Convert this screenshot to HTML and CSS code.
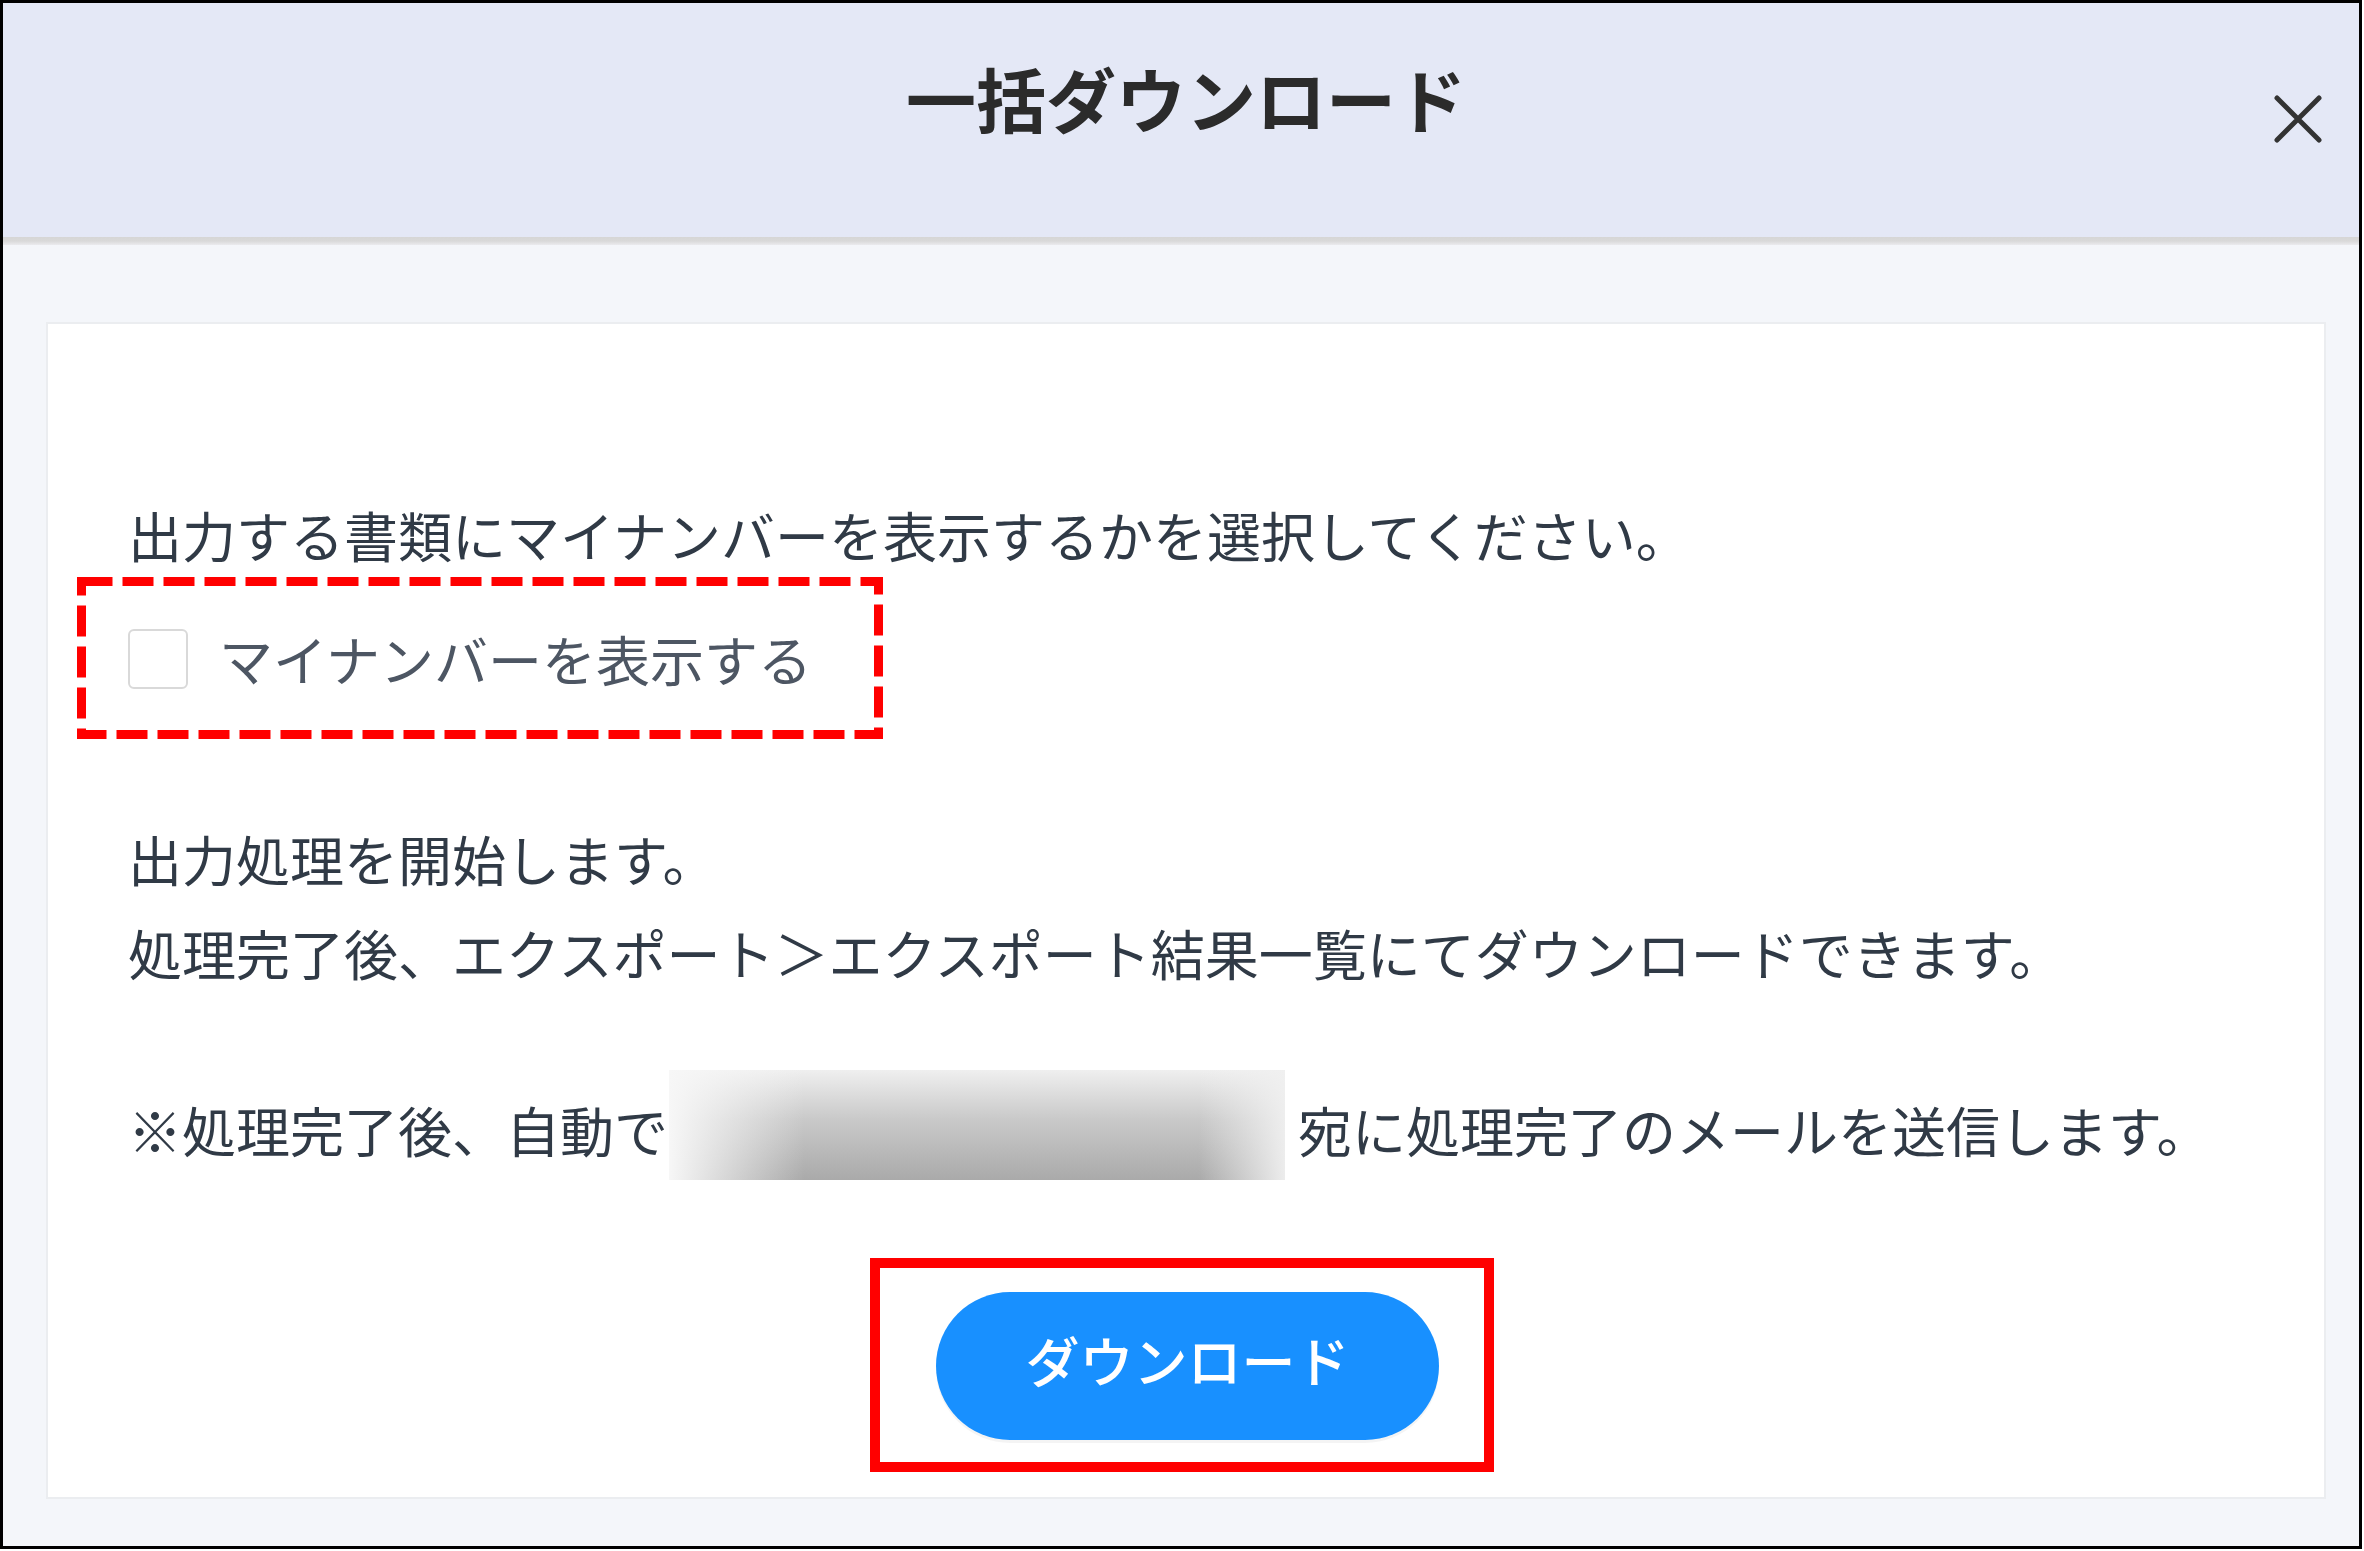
FILE: index.html
```html
<!DOCTYPE html>
<html lang="ja">
<head>
<meta charset="utf-8">
<title>一括ダウンロード</title>
<link rel="stylesheet" href="styles.css">
</head>
<body>
<div class="frame">
  <header class="modal-header">
    <h1 class="title">一括ダウンロード</h1>
    <button class="close" type="button" aria-label="閉じる">
      <svg viewBox="0 0 48 48" width="48" height="48"><path d="M3 3 L45 45 M45 3 L3 45" stroke="#333" stroke-width="5" stroke-linecap="round" fill="none"/></svg>
    </button>
  </header>
  <div class="divider"></div>
  <main class="modal-body">
    <section class="card">
      <p class="text">出力する書類にマイナンバーを表示するかを選択してください。</p>
      <div class="annot-dashed">
        <svg class="dash-svg" viewBox="0 0 806 162" width="806" height="162"><rect x="4.5" y="4.5" width="797" height="153" fill="none" stroke="#ff0000" stroke-width="9" stroke-dasharray="31 10"/></svg>
        <label class="check"><span class="box"></span><span class="check-label">マイナンバーを表示する</span></label>
      </div>
      <p class="text gap1">出力処理を開始します。<br>処理完了後、エクスポート＞エクスポート結果一覧にてダウンロードできます。</p>
      <p class="text gap2">※処理完了後、自動で<span class="blur"></span>宛に処理完了のメールを送信します。</p>
      <div class="btn-row">
        <div class="annot-solid"><button class="btn" type="button">ダウンロード</button></div>
      </div>
    </section>
  </main>
</div>
</body>
</html>
```
FILE: styles.css
```css
html, body {
  margin: 0;
  padding: 0;
  background: #ffffff;
}
body {
  font-family: "Noto Sans CJK JP", "Noto Sans", sans-serif;
}
.frame {
  width: 2362px;
  height: 1549px;
  box-sizing: border-box;
  border: 3px solid #000;
  display: flex;
  flex-direction: column;
  background: #f4f6fa;
}
.modal-header {
  position: relative;
  height: 234px;
  flex: none;
  background: #e4e8f6;
  box-sizing: border-box;
  padding-top: 45px;
}
.title {
  margin: 0;
  padding-left: 10px;
  text-align: center;
  font-size: 70px;
  line-height: 100px;
  font-weight: 700;
  color: #2b2b2b;
}
.close {
  position: absolute;
  top: 92px;
  right: 37px;
  width: 48px;
  height: 48px;
  padding: 0;
  border: 0;
  background: transparent;
  display: block;
}
.close svg {
  display: block;
}
.divider {
  height: 8px;
  flex: none;
  background: linear-gradient(#d6d6d6, #d9d9d9 50%, #ebebee);
}
.modal-body {
  flex: 1;
  display: flex;
  flex-direction: column;
  padding: 77px 33px 47px 43px;
}
.card {
  flex: 1;
  background: #ffffff;
  border: 2px solid #ebedf0;
  padding: 164px 88px 0 80px;
}
.text {
  margin: 0;
  font-size: 54px;
  line-height: 94px;
  color: #303a46;
}
.annot-dashed {
  position: relative;
  width: 806px;
  height: 162px;
  box-sizing: border-box;
  margin: -5px 0 0 -51px;
  padding-left: 51px;
  display: flex;
  align-items: center;
}
.dash-svg {
  position: absolute;
  left: 0;
  top: 0;
}
.check {
  display: flex;
  align-items: center;
  gap: 31px;
  margin-top: 2px;
}
.box {
  width: 60px;
  height: 60px;
  box-sizing: border-box;
  border: 2px solid #d9d9d9;
  border-radius: 6px;
  background: #fff;
}
.check-label {
  font-size: 54px;
  line-height: 94px;
  color: #4d5663;
}
.gap1 {
  margin-top: 73px;
}
.gap2 {
  margin-top: 83px;
}
.blur {
  display: inline-block;
  width: 616px;
  height: 110px;
  vertical-align: middle;
  margin: -12px 13px -12px 1px;
  position: relative;
  top: -13px;
  background:
    linear-gradient(to right, rgba(247,247,247,1) 0%, rgba(247,247,247,0) 22%, rgba(247,247,247,0) 86%, rgba(240,240,240,0.95) 100%),
    linear-gradient(to bottom, #efefef 0%, #c9c9c9 45%, #aaaaaa 100%);
}
.btn-row {
  display: flex;
  justify-content: center;
  margin-top: 77px;
}
.annot-solid {
  border: 10px solid #ff0000;
  padding: 24px 45px 22px 56px;
}
.btn {
  display: flex;
  align-items: center;
  justify-content: center;
  width: 503px;
  height: 148px;
  box-sizing: border-box;
  padding: 0 0 14px 0;
  border: 0;
  border-radius: 74px;
  background: #1890ff;
  color: #ffffff;
  font-family: "Noto Sans CJK JP", "Noto Sans", sans-serif;
  font-size: 54px;
  font-weight: 500;
  box-shadow: 0 3px 0 rgba(0,0,0,0.045);
}
```
